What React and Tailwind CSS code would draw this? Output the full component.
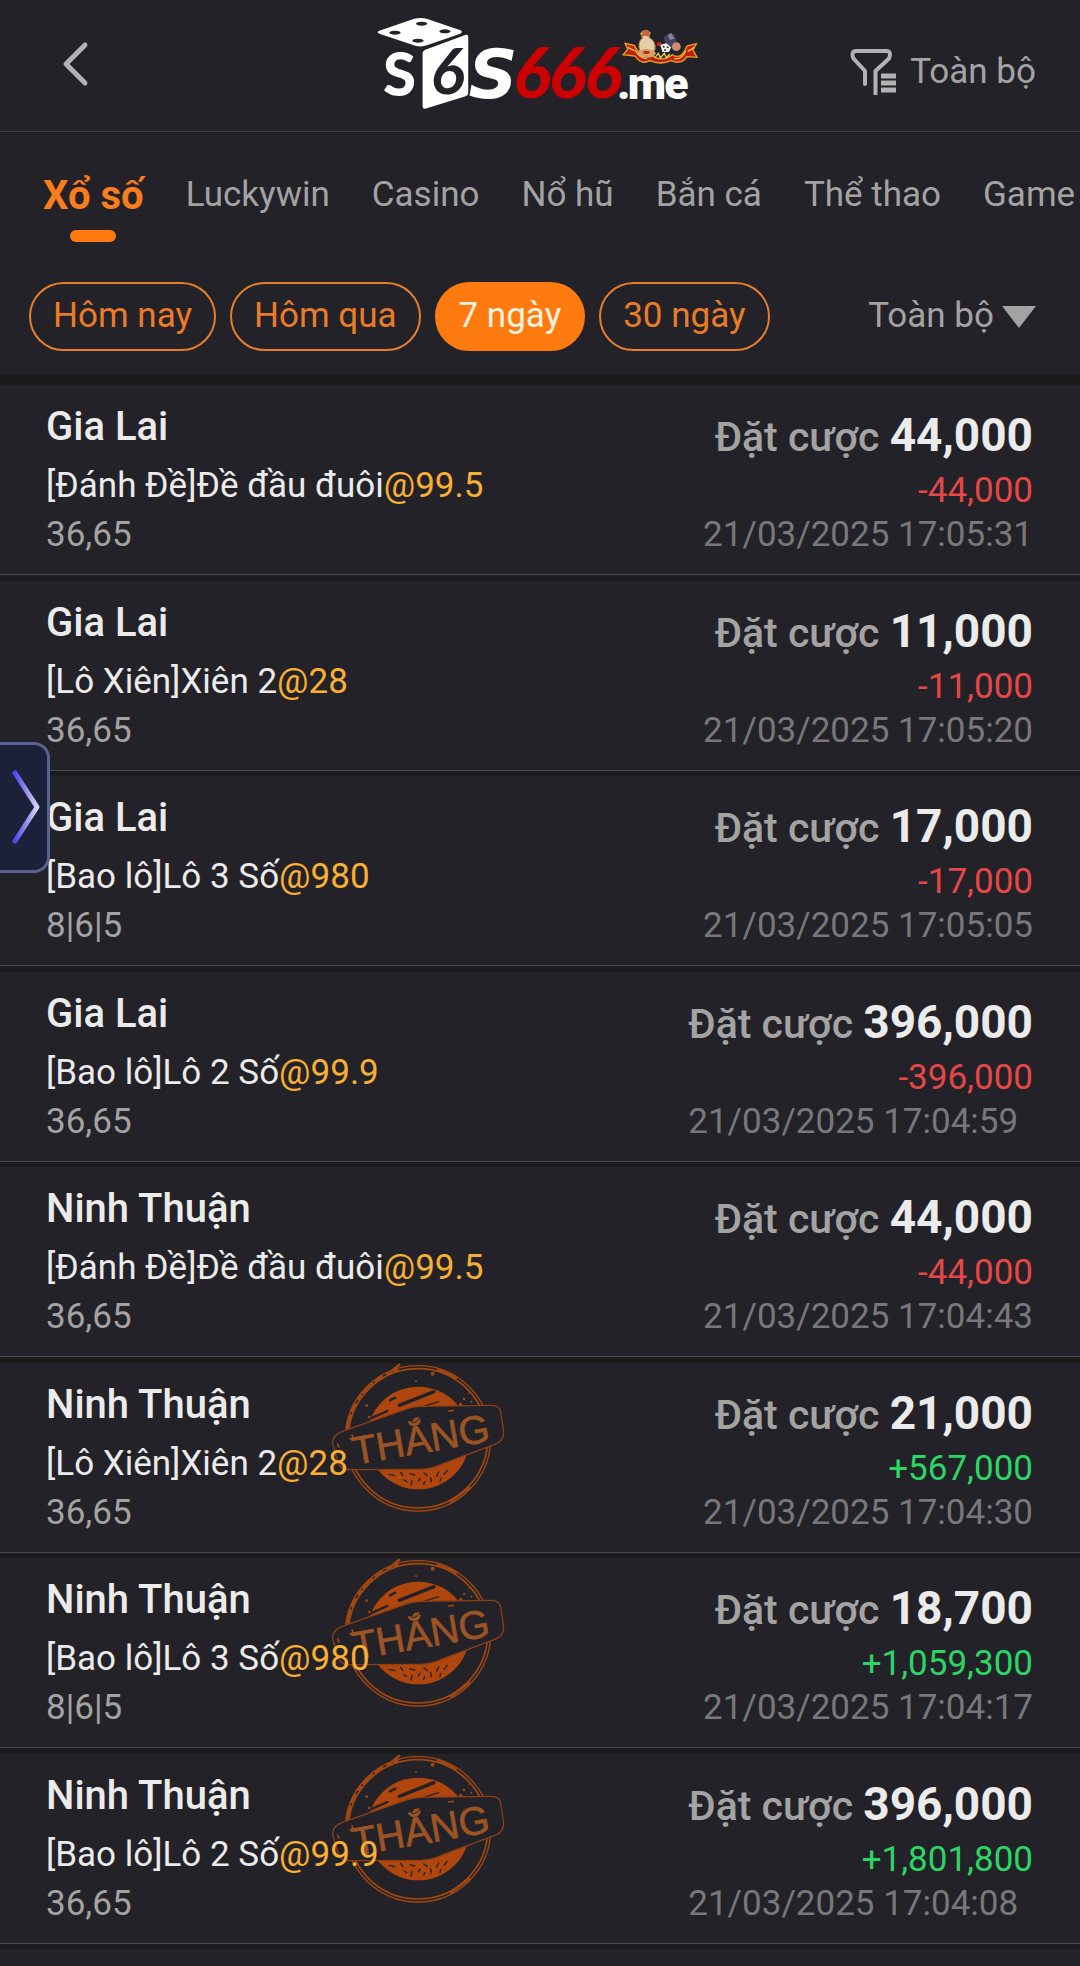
import clsx from 'clsx';

const TABS = ['Xổ số', 'Luckywin', 'Casino', 'Nổ hũ', 'Bắn cá', 'Thể thao', 'Game'];
const RANGES = ['Hôm nay', 'Hôm qua', '7 ngày', '30 ngày'];

const BETS = [
  { place: 'Gia Lai', game: '[Đánh Đề]Đề đầu đuôi', odds: '@99.5', pick: '36,65', stake: '44,000', result: '-44,000', time: '21/03/2025 17:05:31' },
  { place: 'Gia Lai', game: '[Lô Xiên]Xiên 2', odds: '@28', pick: '36,65', stake: '11,000', result: '-11,000', time: '21/03/2025 17:05:20' },
  { place: 'Gia Lai', game: '[Bao lô]Lô 3 Số', odds: '@980', pick: '8|6|5', stake: '17,000', result: '-17,000', time: '21/03/2025 17:05:05' },
  { place: 'Gia Lai', game: '[Bao lô]Lô 2 Số', odds: '@99.9', pick: '36,65', stake: '396,000', result: '-396,000', time: '21/03/2025 17:04:59' },
  { place: 'Ninh Thuận', game: '[Đánh Đề]Đề đầu đuôi', odds: '@99.5', pick: '36,65', stake: '44,000', result: '-44,000', time: '21/03/2025 17:04:43' },
  { place: 'Ninh Thuận', game: '[Lô Xiên]Xiên 2', odds: '@28', pick: '36,65', stake: '21,000', result: '+567,000', time: '21/03/2025 17:04:30', won: true },
  { place: 'Ninh Thuận', game: '[Bao lô]Lô 3 Số', odds: '@980', pick: '8|6|5', stake: '18,700', result: '+1,059,300', time: '21/03/2025 17:04:17', won: true },
  { place: 'Ninh Thuận', game: '[Bao lô]Lô 2 Số', odds: '@99.9', pick: '36,65', stake: '396,000', result: '+1,801,800', time: '21/03/2025 17:04:08', won: true },
];

function Logo() {
  return (
    <svg viewBox="50 45 970 285" className="w-[323px] h-[95px] mr-[6px] overflow-visible" role="img" aria-label="S666.me">
      {/* dice */}
      <path d="M60 92 L165 56 Q184 51 202 56 L304 91 Q312 96 303 101 L203 136 Q186 142 168 137 L60 101 Q50 96 60 92 Z" fill="#fff" />
      <g fill="#232228">
        <ellipse cx="187" cy="71" rx="17" ry="6" />
        <ellipse cx="107" cy="98" rx="17" ry="6" />
        <ellipse cx="257" cy="94" rx="17" ry="6" />
        <ellipse cx="176" cy="122" rx="17" ry="6" />
      </g>
      <path d="M198 149 L318 105 Q327 102 327 111 V278 Q327 286 319 289 L200 326 Q190 329 190 319 V160 Q190 152 198 149 Z" fill="#fff" />
      <g fontFamily="Lato, sans-serif" fontStyle="italic">
        <text x="214" y="282" fontSize="192" fontWeight="700" fill="#232228">6</text>
        <text x="462 569 676" y="293" fontSize="210" fontWeight="900" fill="#cc0202">666</text>
      </g>
      <text x="328" y="294" fontFamily="'DejaVu Sans', sans-serif" fontSize="204" fontStyle="italic" fontWeight="700" fill="#fff">S</text>
      <text x="71" y="289" fontFamily="Lato, sans-serif" fontSize="180" fontWeight="900" fill="#fff">S</text>
      <text x="774 806 916" y="297" fontFamily="Roboto, sans-serif" fontSize="134" fontWeight="900" fill="#fff">.me</text>
      {/* ribbon with the money bag and chips */}
      <path d="M798 130 L826 136 Q846 176 872 162 Q905 190 940 164 Q966 182 984 138 L1012 131 L1002 150 L1014 172 L984 170 Q966 196 936 182 Q905 196 872 182 Q846 196 828 168 L792 164 L806 148 Z" fill="#c41d12" stroke="#e8a51c" strokeWidth="4" />
      <path d="M806 142 l20 10 M828 150 q14 26 36 26 M986 154 l20 -12 M980 152 q-12 28 -34 24" fill="none" stroke="#f5c53c" strokeWidth="4" />
      <path d="M852 92 Q866 86 874 98 L870 112 Q892 124 888 150 Q864 172 842 152 Q834 126 850 114 L844 100 Z" fill="#e6cda4" stroke="#9a6a38" strokeWidth="3" />
      <path d="M850 94 q12 -6 22 4 l-4 12 q-10 -6 -20 0 z" fill="#c96236" />
      <ellipse cx="862" cy="160" rx="28" ry="13" fill="#d3a267" />
      <ellipse cx="862" cy="157" rx="10" ry="5" fill="#b8281c" />
      <path d="M914 112 L934 98 Q948 100 952 122 L948 150 L922 140 Z" fill="#44425f" />
      <path d="M926 104 l12 -4 8 16 -14 4 z" fill="#7f7fa0" />
      <circle cx="952" cy="140" r="13" fill="#d28a70" />
      <circle cx="900" cy="132" r="7" fill="#c9251b" />
      <path d="M904 134 l18 -4 14 12 -6 14 -20 0 z" fill="#f3efe9" />
      <g fill="#333">
        <circle cx="914" cy="140" r="3" />
        <circle cx="926" cy="142" r="3" />
        <circle cx="918" cy="150" r="3" />
      </g>
      <path d="M888 172 l10 -12 6 14 12 -14 6 14 10 -12" fill="none" stroke="#f0d045" strokeWidth="4" />
    </svg>
  );
}

function FilterIcon() {
  return (
    <svg viewBox="0 0 46 46" className="w-[46px] h-[46px]" fill="none" stroke="#b2b2b2" strokeWidth="4" aria-hidden="true">
      <path d="M15 35 V22 L3.500 9.500 Q0.500 2 6.500 2 H36 Q42 2 39 9.500 L25.500 22 V45" strokeLinecap="round" strokeLinejoin="round" />
      <path d="M31 27 H46 M31 34 H46 M31 41 H46" strokeWidth="5" />
    </svg>
  );
}

function WinStamp() {
  return (
    <svg viewBox="60 38 525 450" className="absolute left-[330px] top-0 w-[175px] h-[150px]" role="img" aria-label="THẮNG">
      <g fill="none" stroke="#a2470f">
        <circle cx="324" cy="264" r="218" strokeWidth="4" />
        <circle cx="324" cy="264" r="209" strokeWidth="5" />
        <path d="M112 235 A214 214 0 0 1 265 58" strokeWidth="9" strokeDasharray="44 7 30 12 18 5" />
        <path d="M380 58 A214 214 0 0 1 440 84 M245 62 L270 42 M480 410 L420 455" strokeWidth="8" />
      </g>
      <circle cx="325" cy="263" r="154" fill="#ae460d" />
      <g stroke="#232228" strokeLinecap="round">
        <path d="M268 165 L372 124" strokeWidth="10" />
        <path d="M182 204 L232 182 M240 150 L256 142" strokeWidth="7" />
        <path d="M330 172 L386 154" strokeWidth="4" />
        <path d="M238 372 l16 4 M272 366 l6 10 M300 370 l14 4 M342 368 l10 8 M386 364 l-6 14 M412 360 l-10 12 M306 390 l-3 14 M330 384 l-5 8 M362 382 l2 12 M392 384 l-2 10 M282 388 l8 6 M344 394 l-3 8" strokeWidth="4" />
      </g>
      <path d="M105 240 L290 176 Q310 168 340 168 L545 165 Q568 165 572 185 L581 245 Q582 268 560 280 L400 340 Q365 357 330 357 L118 358 Q92 358 85 338 L68 280 Q66 252 105 240 Z" fill="#232228" stroke="#8a3f16" strokeWidth="4" />
      <path d="M82 280 l6 12 M125 252 l8 16 M118 266 l22 -4 M414 182 l18 -2 M160 324 l8 -3" stroke="#a2470f" strokeWidth="5" />
      <g fill="#a2470f">
        <circle cx="368" cy="70" r="6" />
        <circle cx="318" cy="92" r="3" />
        <circle cx="170" cy="166" r="4" />
        <circle cx="178" cy="200" r="4" />
        <circle cx="462" cy="146" r="4" />
        <circle cx="452" cy="162" r="5" />
        <circle cx="484" cy="154" r="3" />
        <circle cx="476" cy="130" r="2" />
      </g>
      <text x="134" y="344" transform="rotate(-10 134 344)" fontFamily="'Liberation Sans', sans-serif" fontSize="119" fill="#9c5424" stroke="#9c5424" strokeWidth="2">
        THẮNG
      </text>
    </svg>
  );
}

function BetRow({ bet }) {
  return (
    <li className="relative flex justify-between pl-[46px] pr-[47px] pb-[15px] bg-[#232228] border-b border-[#4a4b50] odd:mb-[6px] even:mb-[5px]">
      {bet.won && <WinStamp />}
      <div className="relative pt-[10px] text-[35px] leading-[49px]">
        <h2 className="mb-0.5 text-[40px] leading-[64px] font-medium text-[#ebebeb]">{bet.place}</h2>
        <p className="text-[#ebebeb]">
          {bet.game}
          <span className="text-[#f9b032]">{bet.odds}</span>
        </p>
        <p className="text-[#a3a3a3]">{bet.pick}</p>
      </div>
      <div className="pt-5 text-[35px] leading-[44px] text-right">
        <p className="mb-0.5 text-[41px] leading-[60px] font-medium text-[#a3a3a3]">
          Đặt cược <strong className="text-[46px] font-bold text-[#ebebeb]">{bet.stake}</strong>
        </p>
        <p className={bet.won ? 'text-[#2bd566]' : 'text-[#e54747]'}>{bet.result}</p>
        <time className="block text-left text-[#78787b]">{bet.time}</time>
      </div>
    </li>
  );
}

export default function App() {
  return (
    <div className="relative min-h-screen flex flex-col bg-[#1b1b1b] font-[Roboto,sans-serif] text-[35px] text-[#a3a3a3]">
      <header className="grid grid-cols-[1fr_auto_1fr] items-start bg-[#232228] border-b border-[#404044] pt-[15px] pb-[21px]">
        <button aria-label="Quay lại" className="w-fit ml-[60px] mt-[25px]">
          <svg viewBox="0 0 30 48" className="w-[30px] h-[48px]" fill="none" stroke="#b2b2b2" strokeWidth="5" strokeLinecap="round" strokeLinejoin="round" aria-hidden="true">
            <path d="M25 5 L6 24 L25 43" />
          </svg>
        </button>
        <Logo />
        <button className="flex items-center gap-[14px] justify-self-end mr-[44px] mt-[33px] leading-[48px]">
          <FilterIcon />
          Toàn bộ
        </button>
      </header>

      <nav className="flex items-start gap-[42px] overflow-hidden whitespace-nowrap bg-[#232228] pt-8 pb-10 pl-[43px] leading-[62px]">
        {TABS.map((tab, i) => (
          <a key={tab} href="#" className={clsx('flex flex-col items-center shrink-0', i === 0 && 'text-[40px] leading-[64px] font-bold text-[#f97d1c]')}>
            {tab}
            {i === 0 && <span className="mt-0.5 h-3 w-[46px] rounded-full bg-[#ff7b10]" />}
          </a>
        ))}
      </nav>

      <section className="flex items-center gap-[14px] bg-[#232228] pl-[29px] pr-[44px] pb-[23px] mb-[11px]">
        {RANGES.map((range) => (
          <button
            key={range}
            className={clsx(
              'rounded-full border-2 px-[22px] pb-0.5 leading-[63px] whitespace-nowrap',
              range === '7 ngày' ? 'border-[#ff7b10] bg-[#ff7b10] text-[#fff3e0]' : 'border-[#e57d2b] text-[#ea7c25]',
            )}
          >
            {range}
          </button>
        ))}
        <label className="ml-auto flex items-center gap-2">
          <select aria-label="Trạng thái" className="appearance-none bg-transparent pb-0.5 leading-[63px] [field-sizing:content]">
            <option>Toàn bộ</option>
          </select>
          <svg viewBox="0 0 34 22" className="w-[34px] h-[22px]" fill="#a3a3a3" aria-hidden="true">
            <path d="M0 0 H34 L17 22 Z" />
          </svg>
        </label>
      </section>

      <ul>
        {BETS.map((bet) => (
          <BetRow key={bet.time} bet={bet} />
        ))}
      </ul>
      <div className="flex-1 bg-[#232228]" />

      {/* side drawer handle */}
      <button aria-label="Mở menu" className="absolute left-0 top-[742px] w-[50px] h-[131px] rounded-r-[16px] border-[3px] border-l-0 border-[#5a6294] bg-[#1c2039]">
        <svg viewBox="0 0 47 125" className="w-[47px] h-[125px]" fill="none" aria-hidden="true">
          <defs>
            <linearGradient id="handle" x1="0" x2="1">
              <stop offset="0" stopColor="#4b49ea" />
              <stop offset="1" stopColor="#d6d0f6" />
            </linearGradient>
          </defs>
          <path d="M15 28 L37 62 L15 96" stroke="url(#handle)" strokeWidth="5" strokeLinecap="round" strokeLinejoin="round" />
        </svg>
      </button>
    </div>
  );
}
